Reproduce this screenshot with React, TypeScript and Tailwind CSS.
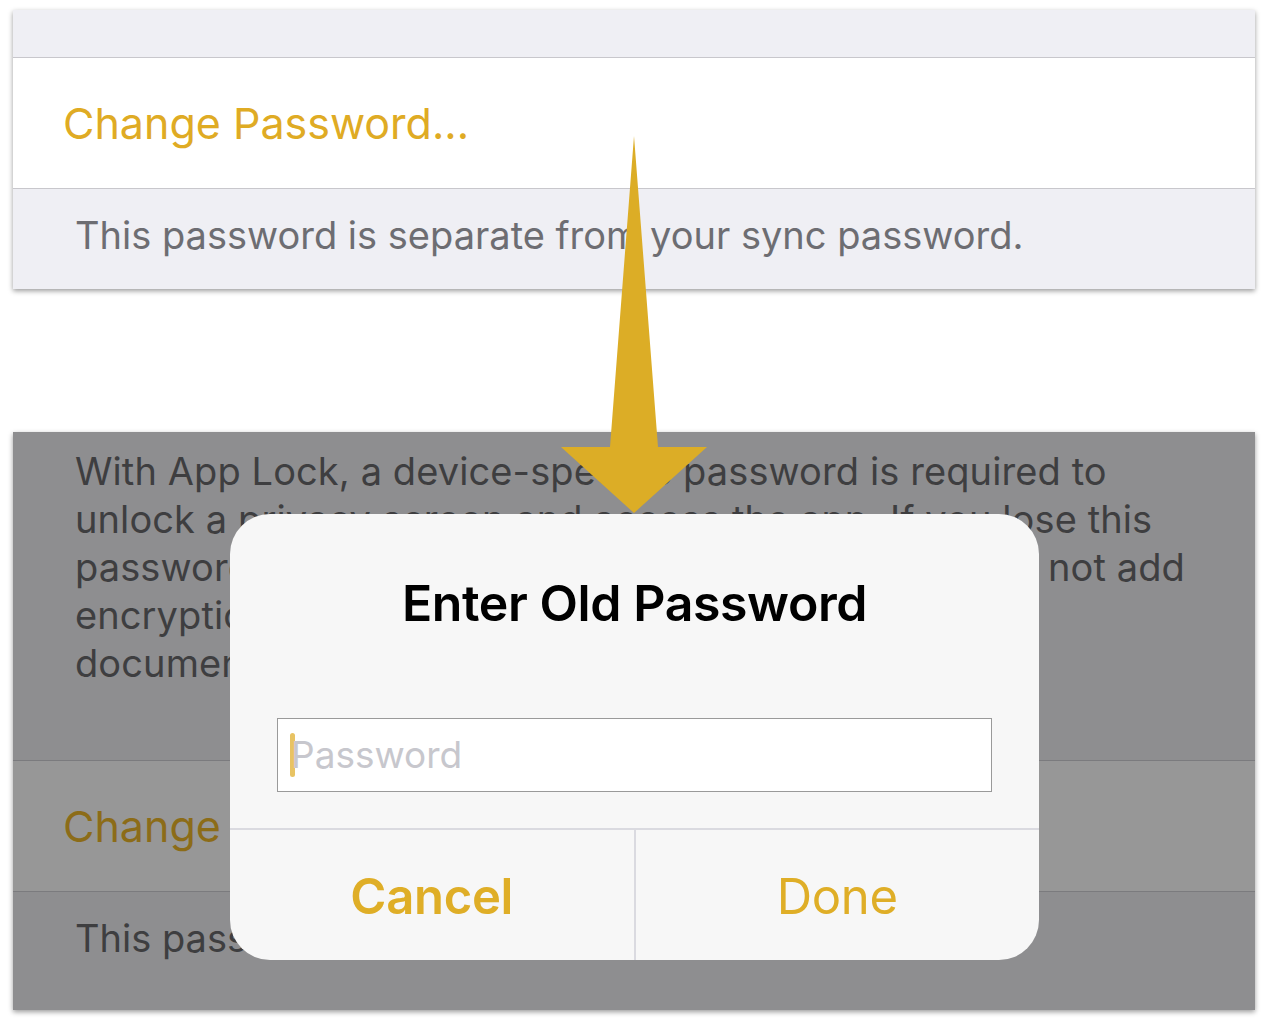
const font = "font-['Inter','Liberation_Sans',sans-serif]";

const Arrow = () => (
  <svg
    className="absolute left-0 top-0 pointer-events-none"
    width="1268"
    height="1026"
    viewBox="0 0 1268 1026"
  >
    <polygon
      points="634,136 658,447 707,447 634,513 561,447 610,447"
      fill="#dcad26"
    />
  </svg>
);

const Dialog = () => (
  <div className="absolute left-[217px] top-[82px] w-[809px] h-[446px] rounded-[40px] bg-[#f7f7f7] flex flex-col overflow-hidden">
    <div className="h-[204px] flex justify-center pt-[59px]">
      <span className="text-[50px] leading-[60px] font-semibold text-black tracking-[-0.4px]">
        Enter Old Password
      </span>
    </div>
    <div className="mx-[47px] h-[74px] bg-white border border-[#9a9a9a] flex items-center pl-[12px]">
      <span className="w-[5px] h-[44px] rounded-full bg-[#e8c363]" />
      <span className="text-[37px] text-[#c7c7cd] -ml-[4px]">Password</span>
    </div>
    <div className="mt-[36px] border-t-2 border-[#dadae0] flex flex-1">
      <div className="flex-1 flex items-center justify-center pt-[4px] border-r-2 border-[#dadae0]">
        <span className="text-[49px] font-semibold text-[#dfae27] tracking-[-0.3px]">Cancel</span>
      </div>
      <div className="flex-1 flex items-center justify-center pt-[4px]">
        <span className="text-[49px] text-[#dfae27] tracking-[-0.3px]">Done</span>
      </div>
    </div>
  </div>
);

export default function App() {
  return (
    <div className={`w-[1268px] h-[1026px] bg-white relative pt-[10px] px-[13px] ${font}`}>
      <div className="w-[1242px] h-[279px] flex flex-col shadow-[0_2px_5px_rgba(0,0,0,0.4)]">
        <div className="h-[48px] bg-[#efeff4] border-b border-[#c8c7cc]" />
        <div className="h-[131px] bg-white border-b border-[#c8c7cc] flex items-center pl-[50px]">
          <span className="text-[43px] text-[#dfab24]">Change Password...</span>
        </div>
        <div className="flex-1 bg-[#efeff4] pl-[62px] pt-[22px]">
          <span className="text-[38px] leading-[48px] text-[#6d6d72]">
            This password is separate from your sync password.
          </span>
        </div>
      </div>

      <div className="mt-[143px] w-[1242px] h-[578px] relative flex flex-col bg-[#8e8e90] shadow-[0_2px_5px_rgba(0,0,0,0.4)]">
        <div className="pl-[62px] pt-[15px] h-[328px] text-[38px] leading-[48px] text-[#3e3e40] tracking-[0.1px]">
          <div>With App Lock, a device-specific password is required to</div>
          <div>unlock a privacy screen and access the app. If you lose this</div>
          <div className="w-[1110px] flex justify-between whitespace-nowrap">
            <span>password, the app must be reset. App Lock does</span>
            <span>not add</span>
          </div>
          <div>encryption to your database or</div>
          <div>documents.</div>
        </div>
        <div className="h-[132px] bg-[#979797] border-t border-b border-[#7b7b7e] flex items-center pl-[50px]">
          <span className="text-[43px] text-[#8c6c18]">Change Password...</span>
        </div>
        <div className="flex-1 pl-[62px] pt-[22px]">
          <span className="text-[38px] leading-[48px] text-[#3e3e40]">
            This password is separate from your sync password.
          </span>
        </div>
        <Dialog />
      </div>
      <Arrow />
    </div>
  );
}
